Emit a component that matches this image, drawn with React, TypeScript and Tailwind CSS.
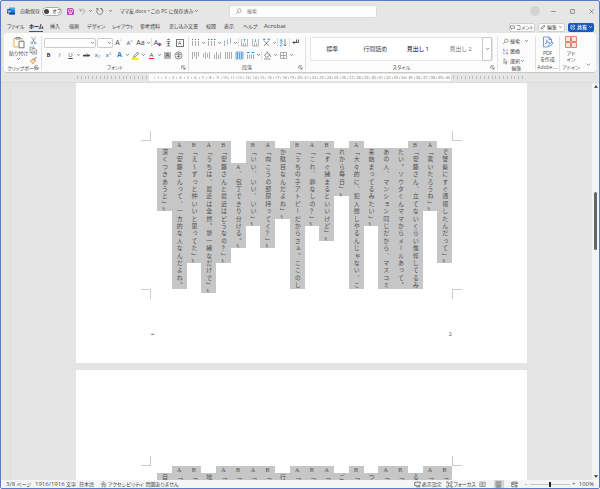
import type { ReactNode } from "react";

// Page text, right-most column first. `skip` is the number of empty cells above the text.
const PAGE_TEXT: { text: string; skip?: number }[] = [
  { text: "で警察にすぐ通報したんだって」↵", skip: 1 },
  { text: "A「驚いたろうね」↵" },
  { text: "B「安藤さん、立てないくらい憔悴してるみ" },
  { text: "たい。ソウタくんママからメールあって。", skip: 1 },
  { text: "あの人、マンション同じだから、マスコミ", skip: 1 },
  { text: "来始まってるみたい」↵", skip: 1 },
  { text: "A「大々的に、犯人捜しやるんじゃない、こ" },
  { text: "れから毎日」↵", skip: 1 },
  { text: "B「すぐ捕まるといいけど」↵" },
  { text: "A「これ、卵なしの？」↵" },
  { text: "B「うちの子アトピーだからさぁ。ここのし" },
  { text: "か駄目なんだよね」↵", skip: 1 },
  { text: "A「向こうの部屋持ってく？」↵" },
  { text: "B「いい、いい、いい」↵" },
  { text: "A、包丁できり分ける。↵", skip: 3 },
  { text: "B「安藤さんと最近はどうなの？」↵" },
  { text: "A「うちは、最近は全然。塾一緒なだけで」↵" },
  { text: "B「え〜ずっと仲いいと思ってた」↵" },
  { text: "A「安藤さんって、一方的な人なんだよね。" },
  { text: "深くつきあうと」↵", skip: 1 },
];

const NEXT_PAGE_TEXT = "B「,A「,る,B「,A「,つ,B「,ご,A「,B「,A「,行,B「,A「,B「,A「,地,B「,A「,自"
  .split(",")
  .map((text) => ({ text, skip: text.length === 1 ? 1 : 0 }));

const TABS = [
  { name: "ファイル", w: "w-[22px]" },
  { name: "ホーム", w: "w-[21px]" },
  { name: "挿入", w: "w-[19px]" },
  { name: "描画", w: "w-[18px]" },
  { name: "デザイン", w: "w-[25px]" },
  { name: "レイアウト", w: "w-[28px]" },
  { name: "参考資料", w: "w-[29px]" },
  { name: "差し込み文書", w: "w-[37px]" },
  { name: "校閲", w: "w-[18px]" },
  { name: "表示", w: "w-[19px]" },
  { name: "ヘルプ", w: "w-[21px]" },
  { name: "Acrobat", w: "w-[24px] text-[6px]" },
];

function Icon({ children, className = "size-[9px]" }: { children: ReactNode; className?: string }) {
  return (
    <svg viewBox="-1 -1 18 18" className={`shrink-0 ${className}`} fill="none" stroke="currentColor" strokeWidth="1.2">
      {children}
    </svg>
  );
}

function Caret({ className = "w-[5px]" }: { className?: string }) {
  return (
    <span className={`flex shrink-0 justify-center ${className}`}>
      <svg viewBox="0 0 6 4" className="h-[2px] w-[3px]" fill="none" stroke="#555" strokeWidth="1.6">
        <path d="M0.5 0.5 3 3 5.5 0.5" />
      </svg>
    </span>
  );
}

function Tool({ label, children, className = "" }: { label: string; children: ReactNode; className?: string }) {
  return (
    <button aria-label={label} className={`flex h-[10px] w-[11px] shrink-0 items-center justify-center ${className}`}>
      {children}
    </button>
  );
}

function Rule() {
  return <span className="h-[9px] w-px shrink-0 bg-[#e0e0e0]" />;
}

function Group({
  name,
  launcher,
  className = "",
  children,
}: {
  name: string;
  launcher?: boolean;
  className?: string;
  children: ReactNode;
}) {
  return (
    <section className={`relative flex flex-col border-r border-[#e2e2e2] ${className}`}>
      <div className="h-[29px]">{children}</div>
      <h2 className="text-center leading-[7px] text-[#555]">{name}</h2>
      {launcher && (
        <button aria-label={`${name}の設定`} className="absolute right-[2px] bottom-px">
          <Icon className="size-[5px]">
            <path d="M2 13V2H13M6 6l7 7M14 7v7H7" strokeWidth="2" />
          </Icon>
        </button>
      )}
    </section>
  );
}

function TitleBar() {
  return (
    <header className="flex h-5 items-center">
      <div className="flex w-[228px] shrink-0 items-center pl-[6px]">
        <svg viewBox="0 0 16 16" className="size-2 shrink-0">
          <rect x="4" y="1" width="12" height="14" rx="1" fill="#41a5ee" />
          <path d="M4 6h12v5H4z" fill="#2b7cd3" />
          <path d="M4 11h12v4H4z" fill="#103f91" />
          <rect x="0" y="4" width="9" height="9" rx="1" fill="#185abd" />
          <path d="m1.8 6 1.2 5 1.5-4 1.5 4 1.2-5" fill="none" stroke="#fff" />
        </svg>
        <span className="ml-[5px] w-[22px] shrink-0">自動保存</span>
        <button
          role="switch"
          aria-checked="false"
          aria-label="自動保存"
          className="flex h-[9px] w-[20px] shrink-0 items-center gap-[3px] rounded-full border border-[#aaa] bg-white px-px whitespace-nowrap"
        >
          <span className="size-[5px] shrink-0 rounded-full bg-[#444]" />
          オフ
        </button>
        <button aria-label="上書き保存" className="ml-1 text-[#b03cbc]">
          <Icon>
            <path d="M2 2h10l2 2v10H2zM5 2v4h6V2M4 14V9h8v5" strokeWidth="1.8" />
          </Icon>
        </button>
        <button aria-label="元に戻す" className="ml-[3px] text-[#999]">
          <Icon>
            <path d="M3 2v5h5M3 7c3-4 7-5 9-2s0 5-5 9" strokeWidth="1.5" />
          </Icon>
        </button>
        <Caret className="w-[6px]" />
        <button aria-label="やり直し" className="ml-[2px] text-[#666]">
          <Icon>
            <path d="M5 3a6 6 0 1 0 7 0M9 2h4v4M5 6V2H1" strokeWidth="1.4" />
          </Icon>
        </button>
        <Caret className="w-[13px]" />
        <h1 className="ml-[3px] whitespace-nowrap">ママ友.docx • この PC に保存済み</h1>
        <Caret className="w-[7px]" />
      </div>
      <label className="flex h-[13px] w-[148px] shrink-0 items-center gap-[5px] rounded-xs border border-[#ddd] bg-[#fdfdfd] pl-[5px]">
        <Icon className="size-[7px] text-[#666]">
          <circle cx="10" cy="6" r="5" />
          <path d="m6.5 9.5-6 6" />
        </Icon>
        <input type="search" aria-label="検索" placeholder="検索" className="min-w-0 flex-1 outline-none placeholder:text-[#777]" />
      </label>
      <div className="ml-auto flex items-center pr-[5px] text-[#444]">
        <span className="mr-[11px] size-[10px] rounded-full bg-[#d4d4d4]" />
        <button aria-label="最小化" className="w-[19px]">
          <Icon className="size-[5px]">
            <path d="M0 8h16" strokeWidth="2" />
          </Icon>
        </button>
        <button aria-label="最大化" className="w-[19px]">
          <Icon className="size-[5px]">
            <rect x="1" y="1" width="14" height="14" rx="2" strokeWidth="2" />
          </Icon>
        </button>
        <button aria-label="閉じる">
          <Icon className="size-[5px]">
            <path d="m1 1 14 14M15 1 1 15" strokeWidth="2" />
          </Icon>
        </button>
      </div>
    </header>
  );
}

function TabBar() {
  return (
    <div className="flex h-3 items-center pl-[6px]">
      <nav className="flex">
        {TABS.map((t) => (
          <button key={t.name} className={`flex h-[10px] whitespace-nowrap ${t.w}`}>
            <span className={t.name === "ホーム" ? "h-full border-b border-[#2b579a] font-bold text-black" : "h-full"}>
              {t.name}
            </span>
          </button>
        ))}
      </nav>
      <div className="ml-auto flex gap-[3px] pr-[5px]">
        <button className="flex h-[9px] w-[26px] items-center justify-center gap-px rounded-[2px] border border-[#d0d0d0] bg-white">
          <Icon className="size-[5px]">
            <path d="M1 2h14v9H7l-3 3v-3H1z" strokeWidth="2" />
          </Icon>
          コメント
        </button>
        <button className="flex h-[9px] w-[27px] items-center justify-center gap-px rounded-[2px] border border-[#d0d0d0] bg-white">
          <Icon className="size-[6px]">
            <path d="m2 14 1-4 8-8 3 3-8 8z" strokeWidth="1.8" />
          </Icon>
          編集
          <Caret />
        </button>
        <button className="flex h-[9px] w-[26px] items-center justify-center gap-px rounded-[2px] bg-[#185abd] font-bold text-white">
          <Icon className="size-[6px]">
            <path d="M6 3H2v11h11v-3M5 10c0-4 3-5 6-5M9 1l5 4-5 4" strokeWidth="2" />
          </Icon>
          共有
          <svg viewBox="0 0 6 4" className="ml-px h-[2px] w-[3px]" fill="none" stroke="#fff" strokeWidth="1.6">
            <path d="M0.5 0.5 3 3 5.5 0.5" />
          </svg>
        </button>
      </div>
    </div>
  );
}

function FontGroup() {
  return (
    <Group name="フォント" launcher className="w-[147px] shrink-0">
      <div className="flex h-[13px] items-center pl-[2px]">
        <div className="flex h-[10px] w-[52px] items-center justify-end rounded-[2px] border border-[#ccc] bg-white">
          <input aria-label="フォント名" className="min-w-0 flex-1 outline-none" />
          <Caret />
        </div>
        <div className="ml-px flex h-[10px] w-[16px] items-center justify-end rounded-[2px] border border-[#ccc] bg-white">
          <input aria-label="フォント サイズ" className="min-w-0 flex-1 outline-none" />
          <Caret />
        </div>
        <Tool label="フォントサイズの拡大" className="text-[7px]">
          A<span className="mb-1 text-[4px] text-[#2b88d8]">^</span>
        </Tool>
        <Tool label="フォントサイズの縮小" className="text-[6px]">
          A<span className="mb-1 text-[4px] text-[#2b88d8]">˅</span>
        </Tool>
        <Tool label="文字種の変換" className="text-[7px]">Aa</Tool>
        <Caret />
        <Rule />
        <Tool label="書式のクリア" className="text-[7px]">
          A<span className="mt-[3px] size-[3px] rotate-45 bg-[#a83fb5]" />
        </Tool>
        <Tool label="ルビ">
          <Icon>
            <path d="M5 2h6M8 0v2M4 6h8M8 6v9M5 10h6M4 15h8" />
          </Icon>
        </Tool>
        <Tool label="囲み線">
          <span className="flex size-[8px] items-center justify-center border border-[#777]">A</span>
        </Tool>
      </div>
      <div className="flex h-[12px] items-center pl-px text-[6px]">
        <Tool label="太字" className="font-bold">B</Tool>
        <Tool label="斜体" className="italic">I</Tool>
        <Tool label="下線" className="underline">U</Tool>
        <Caret />
        <Tool label="取り消し線" className="line-through">ab</Tool>
        <Tool label="下付き">
          x<span className="mt-[3px] text-[4px] text-[#2b88d8]">2</span>
        </Tool>
        <Tool label="上付き">
          x<span className="mb-[3px] text-[4px] text-[#2b88d8]">2</span>
        </Tool>
        <Tool label="文字の効果" className="text-[7px] font-bold text-[#2b7cd3]">A</Tool>
        <Caret />
        <Tool label="蛍光ペンの色">
          <Icon>
            <path d="m5 9 7-8 3 3-8 7-3 1z" />
            <path d="M0 15h14" stroke="#f7ee00" strokeWidth="3.6" />
          </Icon>
        </Tool>
        <Caret />
        <Tool label="フォントの色">
          <span className="border-b border-[#f02020] px-px leading-[6px]">A</span>
        </Tool>
        <Caret />
        <Tool label="文字の網かけ">
          <span className="flex size-[7px] items-center justify-center bg-[#b5b5b5]">A</span>
        </Tool>
        <Tool label="囲い文字">
          <Icon>
            <circle cx="8" cy="8" r="7" />
            <path d="M8 3v2M4.5 7V5h7v2M6 7.500h4L8 9.500V13M4.500 10h7" />
          </Icon>
        </Tool>
      </div>
    </Group>
  );
}

function ListIcon({ numbered }: { numbered?: boolean }) {
  return (
    <Icon>
      <path d="M2 5v10M8 5v10M14 5v10" stroke="#777" />
      <path d={numbered ? "M1 2h3M7 2h3M13 2h3" : "M1 2h2M7 2h2M13 2h2"} stroke="#2b88d8" strokeWidth="2.4" />
    </Icon>
  );
}

function ParagraphGroup() {
  return (
    <Group name="段落" launcher className="w-[117px] shrink-0">
      <div className="flex h-[13px] items-center pl-px">
        <Tool label="箇条書き"><ListIcon /></Tool>
        <Caret />
        <Tool label="段落番号"><ListIcon numbered /></Tool>
        <Caret />
        <Tool label="アウトライン">
          <Icon>
            <path d="M2 8v7M8 5v7M14 3v7" stroke="#777" />
            <path d="M1 6h2M7 3h2M13 1h2" stroke="#2b88d8" strokeWidth="2" />
          </Icon>
        </Tool>
        <Caret />
        <Rule />
        <Tool label="インデントを減らす">
          <Icon>
            <path d="M2 1v14M14 1v14M6 9v6M10 9v6M2 15h12" stroke="#888" />
            <path d="M8 7V1M6 3l2-2 2 2" stroke="#2b88d8" />
          </Icon>
        </Tool>
        <Tool label="インデントを増やす">
          <Icon>
            <path d="M2 1v14M14 1v14M6 9v6M10 9v6M2 15h12" stroke="#888" />
            <path d="M8 1v6M6 5l2 2 2-2" stroke="#2b88d8" />
          </Icon>
        </Tool>
        <Tool label="拡張書式">
          <Icon>
            <path d="M3 15 13 4M13 15 3 4" />
            <path d="M1 1.500h5M10 1.500h5" stroke="#2b88d8" strokeWidth="2" />
          </Icon>
        </Tool>
        <Caret />
        <Rule />
        <Tool label="並べ替え">
          <Icon>
            <path d="M1 7 3.500 1 6 7M2 5h3M1 9h5l-5 6h5" stroke="#2b88d8" />
            <path d="M11 1v14M8.500 12l2.500 3 2.500-3" />
          </Icon>
        </Tool>
        <Rule />
        <Tool label="編集記号の表示">
          <Icon>
            <path d="M14 2v6H3M6 5 3 8l3 3M10 2v5" strokeWidth="1.8" />
          </Icon>
        </Tool>
      </div>
      <div className="flex h-[12px] items-center pl-px text-[#777]">
        <Tool label="上揃え">
          <Icon><path d="M2 1v14M6 1v9M10 1v14M14 1v9" /></Icon>
        </Tool>
        <Tool label="中央揃え">
          <Icon><path d="M2 4v8M6 1v14M10 4v8M14 1v14" /></Icon>
        </Tool>
        <Tool label="下揃え">
          <Icon><path d="M2 6v9M6 1v14M10 6v9M14 1v14" /></Icon>
        </Tool>
        <Tool label="両端揃え">
          <Icon><path d="M2 1v14M6 1v14M10 1v14M14 1v14" /></Icon>
        </Tool>
        <Tool label="均等割り付け">
          <Icon>
            <path d="M1 1h14v14H1z" fill="#c6e0f7" stroke="#2b88d8" />
            <path d="M4 3v10M8 3v10M12 3v10" stroke="#386a9c" />
          </Icon>
        </Tool>
        <Tool label="行間">
          <Icon>
            <path d="M2 6v9M6 6v9M10 6v9M14 6v9" />
            <path d="M1 2h5M10 2h5" stroke="#2b88d8" strokeWidth="2" />
          </Icon>
        </Tool>
        <Caret />
        <Rule />
        <Tool label="塗りつぶし">
          <Icon>
            <path d="M7 2 2 8l5 4 6-5zM7 2V0M13 8l2 3" stroke="#444" />
            <path d="M1 15h13" strokeWidth="1.6" />
          </Icon>
        </Tool>
        <Caret />
        <Tool label="罫線">
          <Icon><path d="M2 2h12v12H2zM8 2v12M2 8h12" /></Icon>
        </Tool>
        <Caret />
      </div>
    </Group>
  );
}

function Ribbon() {
  return (
    <div className="mx-[3px] flex h-[40px] rounded-[3px] border-b border-[#c8c8c8] bg-[#fcfcfc] pt-[3px] pb-px">
      <Group name="クリップボード" launcher className="w-[38px] shrink-0">
        <div className="flex justify-between pr-[3px] pl-[5px]">
          <button className="flex flex-col items-center gap-[1px]">
            <svg viewBox="0 0 24 24" className="h-[13px] w-3" fill="none" strokeWidth="1.8">
              <path d="M10 21H2V4h16v5" stroke="#e8a33d" />
              <path d="M6 5V2h8v3z" stroke="#777" fill="#fff" />
              <path d="M12 9.500h10v13H12z" stroke="#666" fill="#fff" />
            </svg>
            <span className="leading-[6px]">貼り付け</span>
            <Caret className="mt-px" />
          </button>
          <div className="flex flex-col gap-px">
            <Icon>
              <path d="m4 1 6 10M12 1 6 11" stroke="#666" />
              <circle cx="4.500" cy="13" r="2" stroke="#2b88d8" />
              <circle cx="11.500" cy="13" r="2" stroke="#2b88d8" />
            </Icon>
            <Icon>
              <path d="M5 12H1V1h8v3M5 4h6l3 3v8H5zM7 9h5M7 12h5" stroke="#666" />
            </Icon>
            <Icon>
              <path d="m9 6 5-5M7 4l5 5" stroke="#555" strokeWidth="1.8" />
              <path d="M7 5 1 9l6 6 5-6z" stroke="#e07b28" fill="#fbd9b5" />
            </Icon>
          </div>
        </div>
      </Group>
      <FontGroup />
      <ParagraphGroup />
      <Group name="スタイル" launcher className="min-w-0 flex-1">
        <div className="mx-[4px] mt-px flex h-6 items-center rounded-[2px] border border-[#e4e4e4] bg-white text-[6px]">
          <button className="flex-1">標準</button>
          <button className="flex-1">行間詰め</button>
          <button className="flex-1 text-black">見出し 1</button>
          <button className="flex-1 text-[#777]">見出し 2</button>
          <button aria-label="その他のスタイル" className="flex h-6 w-[10px] items-center justify-center rounded-[2px] border border-[#c8c8c8]">
            <Caret />
          </button>
        </div>
      </Group>
      <Group name="編集" className="w-[38px] shrink-0">
        <div className="flex flex-col pl-[4px]">
          <button className="flex h-[10px] items-center">
            <Icon className="mr-px size-[7px]">
              <circle cx="10" cy="6" r="4.500" />
              <path d="m6.500 9.500-5 5" />
            </Icon>
            検索
            <Caret className="ml-[4px] w-[5px]" />
          </button>
          <button className="flex h-[10px] items-center">
            <Icon className="mr-px size-[7px]">
              <path d="M3 1v6h3V4H3M10 9v6h4v-4h-4" stroke="#a83fb5" />
              <path d="M9 4h4v3M3 10v4h4" stroke="#2b88d8" />
            </Icon>
            置換
          </button>
          <button className="flex h-[10px] items-center">
            <Icon className="mr-px size-[7px]">
              <path d="M4 1v12l3-3 2 5 2-1-2-5h4z" />
            </Icon>
            選択
            <Caret />
          </button>
        </div>
      </Group>
      <Group name="Adobe⋯" className="w-[24px] shrink-0">
        <button className="flex w-full flex-col items-center leading-[6px]">
          <svg viewBox="0 0 24 24" className="mb-[2px] size-3" fill="none" stroke="#4f7fe0" strokeWidth="1.6">
            <path d="M11 22H3V2h11l5 5v5M14 2v5h5" />
            <path d="M6 16c3-2 5-6 4-8s-2 1 1 4 5 2 4 1-5 0-9 3z" strokeWidth="1.2" />
            <path d="m12 21 1-3 7-6 2.500 2.500-7 6z" />
          </svg>
          <span>PDF</span>
          <span>を作成</span>
        </button>
      </Group>
      <Group name="アドイン" className="w-[23px] shrink-0 border-transparent">
        <button className="flex w-full flex-col items-center leading-[6px]">
          <svg viewBox="0 0 24 24" className="mb-[2px] size-3" fill="#fbe3dd" stroke="#e08573" strokeWidth="2">
            <path d="M1 1h10v10H1zM13 1h10v10H13zM1 13h10v10H1zM13 13h10v10H13z" />
          </svg>
          <span>アド</span>
          <span>イン</span>
        </button>
      </Group>
      <button aria-label="リボンを折りたたむ" className="w-[13px] shrink-0 self-end pb-[4px] pl-[3px]">
        <Icon className="size-[5px]">
          <path d="m2 5 6 6 6-6" strokeWidth="2" />
        </Icon>
      </button>
    </div>
  );
}

function Ticks({ count }: { count: number }) {
  return (
    <div className="flex h-[3px] flex-1 justify-around px-px">
      {Array.from({ length: count }, (_, i) => (
        <span key={i} className="w-px bg-[#bbb]" />
      ))}
    </div>
  );
}

function Ruler() {
  return (
    <div className="mx-auto flex h-[9px] w-[451px] items-center">
      <Ticks count={19} />
      <div className="flex h-[7px] w-[302px] items-center bg-[#fcfcfc] pl-[5px] text-[4px] leading-[7px] text-[#777]">
        {Array.from({ length: 40 }, (_, i) => (
          <span key={i} className="flex flex-1 items-center">
            <span className="h-[2px] w-px bg-[#ccc]" />
            <span className="flex-1 text-center">{i + 1}</span>
          </span>
        ))}
      </div>
      <Ticks count={19} />
    </div>
  );
}

function TextArea({ columns }: { columns: { text: string; skip?: number }[] }) {
  return (
    <div className="relative h-[148px] pl-[6px]">
      <span className="absolute -top-[10px] -left-[10px] size-[10px] border-r border-b border-[#ccc]" />
      <span className="absolute -top-[10px] -right-[10px] size-[10px] border-b border-l border-[#ccc]" />
      <span className="absolute -bottom-[10px] -left-[10px] size-[10px] border-t border-r border-[#ccc]" />
      <span className="absolute -right-[10px] -bottom-[10px] size-[10px] border-t border-l border-[#ccc]" />
      <div className="flex h-full flex-row-reverse">
        {columns.map((col, i) => (
          <p key={i} className="flex h-full flex-1 flex-col text-[6px] leading-none text-[#505050]">
            {Array.from({ length: col.skip ?? 0 }, (_, n) => (
              <span key={`skip${n}`} className="h-[5%] shrink-0" />
            ))}
            {[...col.text].map((ch, n) => (
              <Cell key={n} ch={ch} />
            ))}
          </p>
        ))}
      </div>
    </div>
  );
}

function Cell({ ch }: { ch: string }) {
  const height = ch === "↵" ? "h-[2.5%] text-[5px]" : "h-[5%]";
  const font = /[AB]/.test(ch) ? "font-['Liberation_Serif',serif] [text-orientation:upright]" : "font-['Noto_Sans_CJK_JP',sans-serif]";
  return (
    <span className={`flex shrink-0 items-center justify-center bg-[#c6c6c6] [writing-mode:vertical-rl] ${height} ${font}`}>
      {ch}
    </span>
  );
}

function Workspace() {
  return (
    <main className="flex min-h-0 flex-1 border-t border-[#dcdcdc] bg-[#e4e4e4]">
      <div className="w-[10px] shrink-0 border-r border-[#dedede]" />
      <div className="min-w-0 flex-1 overflow-hidden">
        <article className="mx-auto h-[280px] w-[451px] bg-white px-[75px] pt-[58px]">
          <TextArea columns={PAGE_TEXT} />
          <footer className="mt-[41px] flex justify-between font-['DejaVu_Sans',sans-serif] text-[5px] leading-[8px] text-[#666]">
            <span>↵</span>
            <span>2</span>
          </footer>
        </article>
        <article className="mx-auto mt-[7px] h-[280px] w-[451px] bg-white px-[75px] pt-[96px]">
          <TextArea columns={NEXT_PAGE_TEXT} />
        </article>
      </div>
      <div className="flex w-[7px] shrink-0 flex-col items-center bg-[#f3f3f3] py-[2px]">
        <svg viewBox="0 0 6 4" className="h-[3px] w-1 fill-[#333]">
          <path d="M0 4 3 0l3 4z" />
        </svg>
        <span className="mt-[104px] h-[58px] w-[3px] rounded-full bg-[#666]" />
        <svg viewBox="0 0 6 4" className="mt-auto h-[3px] w-1 fill-[#333]">
          <path d="M0 0h6L3 4z" />
        </svg>
      </div>
    </main>
  );
}

function StatusBar() {
  return (
    <footer className="flex h-2 shrink-0 items-center bg-[#f5f5f5] pr-[5px] pl-[5px] whitespace-nowrap">
      <span className="w-[29px]"><span className="text-[6px]">3/8</span> ページ</span>
      <span className="w-[44px]"><span className="text-[6px]">1916/1916</span> 文字</span>
      <span className="w-[21px]">日本語</span>
      <button className="flex items-center gap-px">
        <Icon className="size-[7px]">
          <circle cx="8" cy="3" r="2" />
          <path d="M1 6c5 2 9 2 14 0M6 8v3l-2 4M10 8l1 3M9 13l2 2 4-5" strokeWidth="1.6" />
        </Icon>
        アクセシビリティ: 問題ありません
      </button>
      <button className="ml-auto flex w-[32px] items-center gap-px">
        <Icon className="size-[7px]">
          <path d="M8 11H1V2h14v5M5 14h4" strokeWidth="1.8" />
          <circle cx="12" cy="12" r="2.500" strokeWidth="1.8" />
        </Icon>
        表示設定
      </button>
      <button className="flex w-[32px] items-center gap-px">
        <Icon className="size-[7px]">
          <path d="M1 5V1h4M11 1h4v4M15 11v4h-4M5 15H1v-4M5 4h5l2 2v6H5z" strokeWidth="1.6" />
        </Icon>
        フォーカス
      </button>
      <button aria-label="閲覧モード" className="flex h-full w-[10px] items-center justify-center">
        <Icon className="size-[7px]">
          <path d="M1 2h6l1 1 1-1h6v11H9l-1 1-1-1H1zM8 3v11M3 6h3M3 9h3M10 6h3M10 9h3" />
        </Icon>
      </button>
      <button aria-label="印刷レイアウト" className="mx-[6px] flex h-full w-[10px] items-center justify-center bg-[#d6d6d6]">
        <Icon className="size-[7px]">
          <path d="M2 1h12v14H2zM4 4h8M4 7h8M4 10h8M4 12.500h8" />
        </Icon>
      </button>
      <button aria-label="Web レイアウト" className="flex h-full w-[10px] items-center justify-center">
        <Icon className="size-[7px]">
          <path d="M7 14H1V2h14v5M1 5h14M3 8h5" strokeWidth="1.6" />
          <circle cx="12" cy="12" r="3" strokeWidth="1.8" />
        </Icon>
      </button>
      <button aria-label="縮小" className="ml-[3px] w-[7px] text-center">−</button>
      <input
        type="range"
        aria-label="ズーム"
        defaultValue="50"
        className="h-[5px] w-[40px] appearance-none bg-linear-to-b from-transparent from-40% via-[#999] via-40% to-transparent to-60% [&::-webkit-slider-thumb]:h-[5px] [&::-webkit-slider-thumb]:w-[2px] [&::-webkit-slider-thumb]:appearance-none [&::-webkit-slider-thumb]:bg-[#222]"
      />
      <button aria-label="拡大" className="w-[8px] text-center">+</button>
      <span className="ml-px text-[6px]">100%</span>
    </footer>
  );
}

export default function App() {
  return (
    <div className="flex h-screen flex-col overflow-hidden rounded-xs border border-[#5b7bc9] bg-[#e6e6e6] font-['Open_Sans','Noto_Sans_CJK_JP',sans-serif] text-[5px] leading-[8px] text-[#444] [font-feature-settings:'palt']">
      <TitleBar />
      <TabBar />
      <Ribbon />
      <Ruler />
      <Workspace />
      <StatusBar />
    </div>
  );
}
